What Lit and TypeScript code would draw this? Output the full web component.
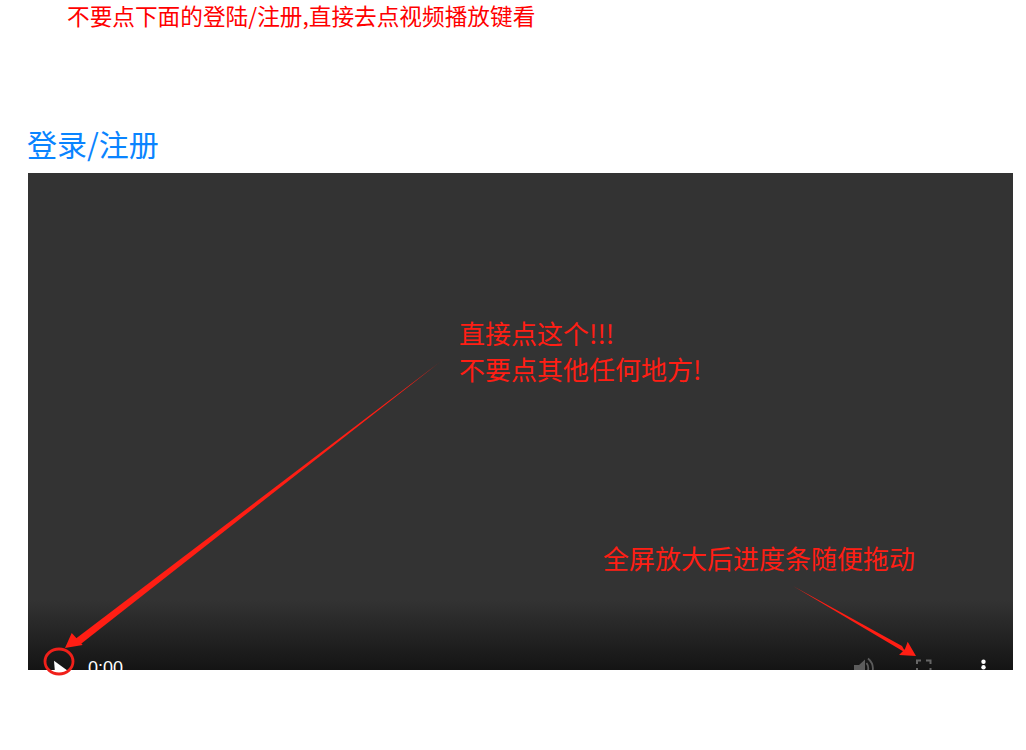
import { LitElement, html, css } from "lit";
import { customElement } from "lit/decorators.js";

@customElement("app-root")
export class AppRoot extends LitElement {
  static styles = css`
    :host { display: block; width: 1026px; height: 750px; overflow: hidden; background: #fff;
      font-family: "Noto Sans CJK SC", "Liberation Sans", sans-serif; }
    .notice { height: 40px; padding-left: 67px; color: #f00; font-size: 22.67px; line-height: 32px; white-space: nowrap; }
    .auth { margin: 80px 0 0 27px; height: 53px; color: #0a84ff; font-size: 30px; line-height: 46px; white-space: nowrap; }
    .video { position: relative; margin-left: 28px; width: 985px; height: 497px; background: #333; }
    .controls { position: absolute; inset: 0; overflow: hidden; }
    .shade { position: absolute; left: 0; right: 0; bottom: 0; height: 70px; background: linear-gradient(to bottom, #333, #141414); }
    .note { position: absolute; color: #ff1e14; font-size: 26px; line-height: 36px; white-space: nowrap; }
    .n1 { left: 431px; top: 142px; }
    .n2 { left: 575px; top: 367px; }
    .time { position: absolute; left: 60px; top: 482px; color: #fff; font-family: "Liberation Sans", sans-serif; font-size: 18px; line-height: 26px; }
    svg.draw { position: absolute; left: 0; top: 0; overflow: visible; }
  `;

  render() {
    return html`
      <div class="notice">不要点下面的登陆/注册,直接去点视频播放键看</div>
      <div class="auth">登录/注册</div>
      <div class="video">
        <div class="controls">
          <div class="shade"></div>
          <div class="time">0:00</div>
          <svg class="draw" width="985" height="497" viewBox="0 0 985 497">
            <!-- volume -->
            <path d="M826 492 h5 l6 -5.500 v14 h-11 Z" fill="#5c5c5c" />
            <path d="M838.500 490 q3 4 1 9 M840 485.500 q7 6 4 15" fill="none" stroke="#5c5c5c" stroke-width="1.800" />
            <!-- fullscreen -->
            <path d="M889 491 v-3.500 h4 M898 487.500 h4.500 v3.500 M889 495 v4 M902.500 495 v4" fill="none" stroke="#666" stroke-width="2" />
            <!-- menu -->
            <circle cx="955.500" cy="488.700" r="2.200" fill="#fff" />
            <circle cx="955.500" cy="494.300" r="2.200" fill="#fff" />
          </svg>
        </div>
        <div class="note n1">直接点这个!!!<br />不要点其他任何地方!</div>
        <div class="note n2">全屏放大后进度条随便拖动</div>
        <svg class="draw" width="985" height="497" viewBox="0 0 985 497">
          <!-- play -->
          <path d="M26 487.700 L38.700 497 L27 499.700 Z" fill="#fff" />
          <ellipse cx="31" cy="488.500" rx="14" ry="12.500" fill="none" stroke="#f0201a" stroke-width="2.800" />
          <!-- long arrow -->
          <path d="M412 189 L46 467 L51.500 472 Z" fill="#ff1e14" />
          <path d="M37 475 L43.700 460 L54.700 472 Z" fill="#ff1e14" />
          <!-- short arrow -->
          <path d="M765 413 L874 473 L878 480 Z" fill="#ff1e14" />
          <path d="M888 483 L871 482 L877 476 L879.700 468.700 Z" fill="#ff1e14" />
        </svg>
      </div>
    `;
  }
}
